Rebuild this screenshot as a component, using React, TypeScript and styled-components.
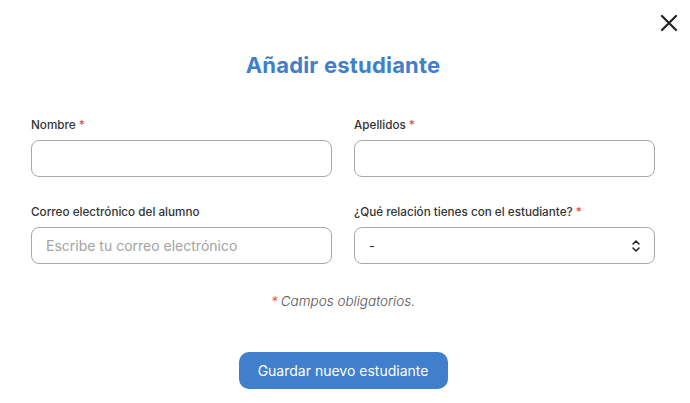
import styled, { createGlobalStyle } from "styled-components";

const GlobalStyle = createGlobalStyle`
  html, body {
    margin: 0;
    padding: 0;
    background: #fff;
  }
  body {
    font-family: Inter, "Noto Sans", "Liberation Sans", sans-serif;
    color: #333;
  }
`;

const Modal = styled.div`
  position: relative;
  width: 690px;
  height: 403px;
  box-sizing: border-box;
  padding: 50px 35px 0 31px;
  display: flex;
  flex-direction: column;
  align-items: center;
`;

const CloseButton = styled.button`
  position: absolute;
  top: 12px;
  right: 10px;
  width: 22px;
  height: 22px;
  border: none;
  background: transparent;
  padding: 0;
  cursor: pointer;
  display: flex;
  align-items: center;
  justify-content: center;
`;

const Title = styled.h2`
  margin: 0;
  font-size: 22px;
  font-weight: 700;
  color: #3f7fcb;
  line-height: 30px;
  letter-spacing: 0.2px;
`;

const Grid = styled.div`
  width: 100%;
  margin-top: 37px;
  display: grid;
  grid-template-columns: 1fr 1fr;
  column-gap: 22px;
  row-gap: 27px;
`;

const Field = styled.label`
  display: flex;
  flex-direction: column;
  gap: 7px;
`;

const LabelText = styled.span`
  font-size: 11.7px;
  font-weight: 500;
  color: #333;
  line-height: 16px;
`;

const Required = styled.span`
  color: #e0463b;
  margin-left: 3px;
`;

const TextInput = styled.input`
  box-sizing: border-box;
  height: 37px;
  width: 100%;
  border: 1px solid #a9a9a9;
  border-radius: 8px;
  padding: 0 14px;
  font-family: inherit;
  font-size: 14px;
  color: #333;
  outline: none;
  background: #fff;

  &::placeholder {
    color: #a3a3a3;
  }
`;

const SelectWrap = styled.div`
  position: relative;
`;

const Select = styled.select`
  box-sizing: border-box;
  height: 37px;
  width: 100%;
  border: 1px solid #a9a9a9;
  border-radius: 8px;
  padding: 0 14px;
  font-family: inherit;
  font-size: 13px;
  color: #333;
  background: #fff;
  appearance: none;
  outline: none;
`;

const Chevron = styled.svg`
  position: absolute;
  right: 14px;
  top: 50%;
  transform: translateY(-50%);
  pointer-events: none;
`;

const Note = styled.p`
  margin: 29px 0 0;
  font-size: 13.5px;
  font-style: italic;
  font-weight: 300;
  color: #555;
`;

const SaveButton = styled.button`
  margin-top: 43px;
  height: 37px;
  padding: 0 16px;
  width: 209px;
  border: none;
  border-radius: 10px;
  background: #3f7fcb;
  color: #fff;
  font-family: inherit;
  font-size: 14px;
  font-weight: 400;
  cursor: pointer;
`;

const App = () => {
  return (
    <>
      <GlobalStyle />
      <Modal>
        <CloseButton aria-label="Cerrar">
          <svg width="18" height="18" viewBox="0 0 18 18">
            <path
              d="M2 2 L16 16 M16 2 L2 16"
              stroke="#222"
              strokeWidth="2.2"
              strokeLinecap="round"
            />
          </svg>
        </CloseButton>
        <Title>Añadir estudiante</Title>
        <Grid>
          <Field>
            <LabelText>
              Nombre<Required>*</Required>
            </LabelText>
            <TextInput type="text" />
          </Field>
          <Field>
            <LabelText>
              Apellidos<Required>*</Required>
            </LabelText>
            <TextInput type="text" />
          </Field>
          <Field>
            <LabelText>Correo electrónico del alumno</LabelText>
            <TextInput type="email" placeholder="Escribe tu correo electrónico" />
          </Field>
          <Field>
            <LabelText>
              ¿Qué relación tienes con el estudiante?<Required>*</Required>
            </LabelText>
            <SelectWrap>
              <Select defaultValue="-">
                <option value="-">-</option>
                <option value="padre">Padre</option>
                <option value="madre">Madre</option>
              </Select>
              <Chevron width="10" height="14" viewBox="0 0 10 14">
                <path
                  d="M2 5 L5 2 L8 5 M2 9 L5 12 L8 9"
                  fill="none"
                  stroke="#222"
                  strokeWidth="1.5"
                  strokeLinecap="round"
                  strokeLinejoin="round"
                />
              </Chevron>
            </SelectWrap>
          </Field>
        </Grid>
        <Note>
          <Required style={{ marginLeft: 0, marginRight: 3 }}>*</Required>
          Campos obligatorios.
        </Note>
        <SaveButton>Guardar nuevo estudiante</SaveButton>
      </Modal>
    </>
  );
};

export default App;
